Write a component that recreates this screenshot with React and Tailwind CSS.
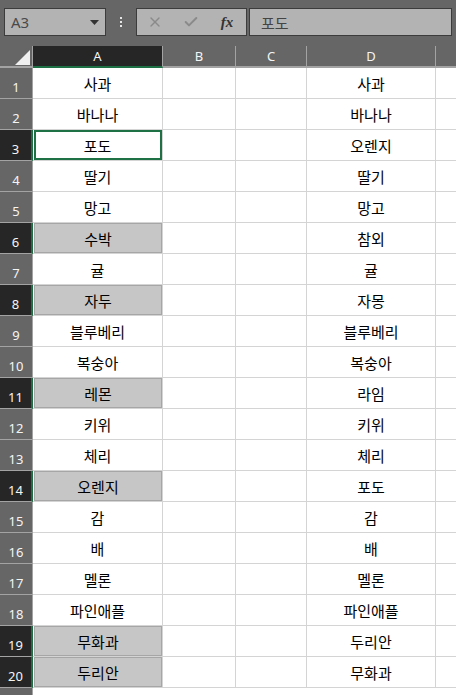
import { FiX, FiCheck } from "react-icons/fi";

const colA = ["사과", "바나나", "포도", "딸기", "망고", "수박", "귤", "자두", "블루베리", "복숭아", "레몬", "키위", "체리", "오렌지", "감", "배", "멜론", "파인애플", "무화과", "두리안"];
const colD = ["사과", "바나나", "오렌지", "딸기", "망고", "참외", "귤", "자몽", "블루베리", "복숭아", "라임", "키위", "체리", "포도", "감", "배", "멜론", "파인애플", "두리안", "무화과"];
const filled = [6, 8, 11, 14, 19, 20];
const activeRow = 3;

const uiFont = "font-['Noto_Sans','Noto_Sans_CJK_KR',sans-serif]";
const cellFont = "font-['Noto_Sans_CJK_KR','Noto_Sans',sans-serif]";

function Toolbar() {
  return (
    <div className="flex h-[46px] items-start pt-[8px]">
      <div className="ml-[4px] flex h-[28px] w-[102px] items-center justify-between border border-[#3c3c3c] bg-[#b3b3b3] pl-[6px] pr-[6px]">
        <span className={`${uiFont} text-[15px] leading-none text-[#4a4a4a]`}>A3</span>
        <svg width="9" height="5" viewBox="0 0 9 5">
          <polygon points="0,0 9,0 4.5,5" fill="#333333" />
        </svg>
      </div>
      <div className="flex h-[28px] w-[30px] flex-col items-center justify-center gap-[2px]">
        <span className="h-[2px] w-[2px] bg-[#e6e6e6]" />
        <span className="h-[2px] w-[2px] bg-[#e6e6e6]" />
        <span className="h-[2px] w-[2px] bg-[#e6e6e6]" />
      </div>
      <div className="flex h-[28px] w-[111px] items-center border border-[#3c3c3c] bg-[#b3b3b3]">
        <span className="flex w-[36px] justify-center text-[16px] text-[#8a8a8a]">
          <FiX />
        </span>
        <span className="flex w-[36px] justify-center text-[16px] text-[#8a8a8a]">
          <FiCheck strokeWidth={3} />
        </span>
        <span className="flex w-[36px] justify-center font-['Liberation_Serif',serif] text-[15px] font-bold italic leading-none text-[#333333]">
          fx
        </span>
      </div>
      <div className="ml-[2px] flex h-[28px] w-[203px] items-center border border-[#3c3c3c] bg-[#b3b3b3] pl-[11px]">
        <span className={`${cellFont} text-[15px] leading-none text-[#444444]`}>포도</span>
      </div>
    </div>
  );
}

function HeaderRow() {
  const cols = [
    { label: "A", w: "w-[130px]", sel: true },
    { label: "B", w: "w-[73px]" },
    { label: "C", w: "w-[71px]" },
    { label: "D", w: "w-[129px]" },
  ];
  return (
    <div className="flex h-[22px]">
      <div className="flex w-[33px] items-end justify-end border-r border-b-2 border-[#a3a3a3] pb-[1px] pr-[2px]">
        <svg width="15" height="15" viewBox="0 0 15 15">
          <polygon points="15,0 15,15 0,15" fill="#efefef" />
        </svg>
      </div>
      {cols.map((c) => (
        <div
          key={c.label}
          className={`${c.w} flex items-center justify-center border-r border-b-2 ${uiFont} text-[13px] leading-none text-[#f5f5f5] ${
            c.sel ? "border-r-[#a3a3a3] border-b-[#1e7145] bg-[#262626]" : "border-[#a3a3a3]"
          }`}
        >
          {c.label}
        </div>
      ))}
      <div className="flex-1 border-b-2 border-[#a3a3a3]" />
    </div>
  );
}

function Cell({ w, text, fill, active }) {
  return (
    <div className={`${w} relative flex border-r border-b border-[#d4d4d4] bg-white`}>
      {fill ? (
        <div className={`ml-px flex flex-1 items-center justify-center border border-[#a6a6a6] bg-[#c6c6c6] ${cellFont} text-[15px] leading-none text-black`}>
          {text}
        </div>
      ) : (
        <div className={`flex flex-1 items-center justify-center ${cellFont} text-[15px] leading-none text-black`}>{text}</div>
      )}
      {active && <div className="absolute top-0 right-0 bottom-0 left-px border-2 border-[#1e7145]" />}
    </div>
  );
}

function Row({ n, a, d }) {
  const fill = filled.includes(n);
  const sel = fill || n === activeRow;
  return (
    <div className="flex h-[31px]">
      <div
        className={`flex w-[33px] items-end justify-center border-b border-b-[#a3a3a3] pb-[4px] ${uiFont} text-[13px] leading-none text-[#f5f5f5] ${
          sel ? "border-r-2 border-r-[#1e7145] bg-[#262626]" : "border-r border-r-[#a3a3a3]"
        }`}
      >
        {n}
      </div>
      <Cell w="w-[130px]" text={a} fill={fill} active={n === activeRow} />
      <Cell w="w-[73px]" />
      <Cell w="w-[71px]" />
      <Cell w="w-[129px]" text={d} />
      <div className="flex-1 border-b border-[#d4d4d4] bg-white" />
    </div>
  );
}

export default function App() {
  return (
    <div className="h-[695px] w-[456px] overflow-hidden bg-[#666666]">
      <Toolbar />
      <HeaderRow />
      {colA.map((a, i) => (
        <Row key={i} n={i + 1} a={a} d={colD[i]} />
      ))}
      <div className="flex h-[31px]">
        <div className="w-[33px] border-r border-[#a3a3a3]" />
        <div className="flex-1 bg-white" />
      </div>
    </div>
  );
}
